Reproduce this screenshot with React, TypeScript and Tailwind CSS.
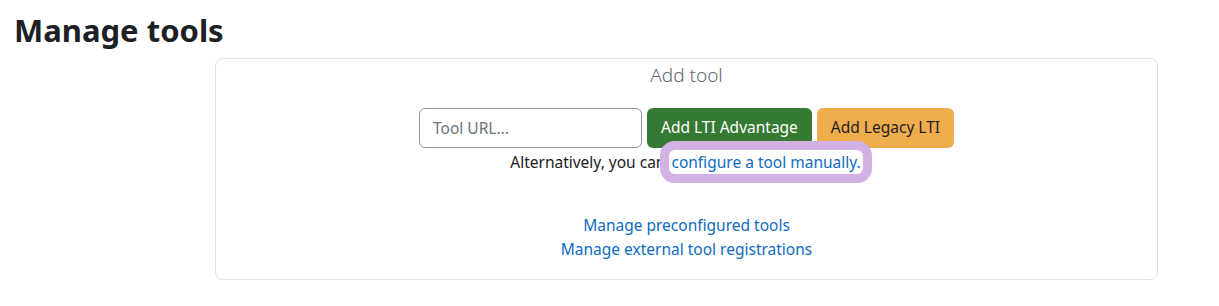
const App = () => {
  return (
    <div className="min-h-[306px] bg-white px-[14px] pt-[10px] font-['Noto_Sans','Open_Sans',sans-serif] text-[#1d2125]">
      <h2 className="text-[31px] font-bold leading-[40px]">Manage tools</h2>
      <div className="ml-[201px] mt-[8px] w-[943px] h-[222px] rounded-lg border border-[#dee2e6] flex flex-col items-center">
        <h3 className="mt-[2px] text-[19px] font-light leading-[28px] text-[#5f6870]">Add tool</h3>
        <div className="mt-[19px] flex gap-[5px]">
          <input
            className="h-[40px] w-[223px] rounded-md border border-[#8f959e] px-[13px] text-[15.5px] placeholder:text-[#6a737b] outline-none"
            placeholder="Tool URL..."
          />
          <button className="h-[40px] rounded-md bg-[#357a32] px-[14px] text-[15.5px] text-white">
            Add LTI Advantage
          </button>
          <button className="h-[40px] rounded-md bg-[#f0ad4e] px-[14px] text-[15.5px] text-[#1d2125]">
            Add Legacy LTI
          </button>
        </div>
        <p className="mt-[2px] text-[15.5px] leading-[24px]">
          Alternatively, you can{" "}
          <a
            href="#"
            className="relative z-10 inline-block rounded-[6px] bg-white px-[2px] leading-[24px] text-[#0f6cbf] shadow-[0_0_0_9px_#d2b2e4]"
          >
            configure a tool manually.
          </a>
        </p>
        <div className="mt-[39px] flex flex-col items-center text-[15.5px] leading-[24px] text-[#0f6cbf]">
          <a href="#">Manage preconfigured tools</a>
          <a href="#">Manage external tool registrations</a>
        </div>
      </div>
    </div>
  );
};

export default App;
